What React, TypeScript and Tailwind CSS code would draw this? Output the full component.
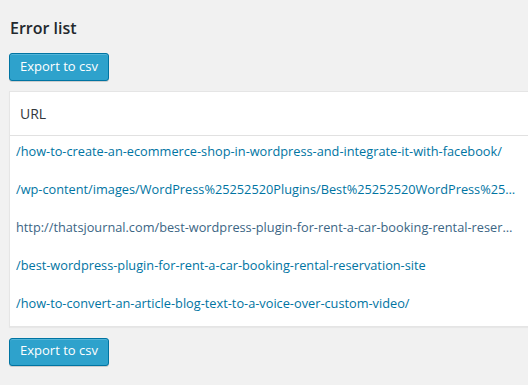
const rows = [
  { url: '/how-to-create-an-ecommerce-shop-in-wordpress-and-integrate-it-with-facebook/', link: true },
  { url: '/wp-content/images/WordPress%25252520Plugins/Best%25252520WordPress%25252520Plugins/', link: true },
  { url: 'http://thatsjournal.com/best-wordpress-plugin-for-rent-a-car-booking-rental-reservation-site/', link: false },
  { url: '/best-wordpress-plugin-for-rent-a-car-booking-rental-reservation-site', link: true },
  { url: '/how-to-convert-an-article-blog-text-to-a-voice-over-custom-video/', link: true },
]

function ExportButton() {
  return (
    <button className="h-[28px] w-[100px] rounded-[3px] border border-[#0074a2] bg-[#2ea2cc] pb-px text-[13px] text-white shadow-[inset_0_1px_0_rgba(120,200,230,0.5),0_1px_0_rgba(0,0,0,0.15)]">
      Export to csv
    </button>
  )
}

export default function App() {
  return (
    <div
      className="h-[385px] w-[528px] overflow-hidden bg-[#f1f1f1] pl-[9px] pt-[17px] text-[#444]"
      style={{ fontFamily: '"Open Sans", sans-serif' }}
    >
      <h3 className="ml-px text-[16px] font-semibold leading-[22px] text-[#23282d]">Error list</h3>

      <div className="mt-[14px]">
        <ExportButton />
      </div>

      {/* Table */}
      <div className="mt-[10px] w-[560px] border border-[#e5e5e5] bg-white shadow-[0_1px_1px_rgba(0,0,0,0.04)]">
        <div className="flex h-[44px] items-center border-b border-[#e1e1e1] pl-[10px] text-[14px] text-[#32373c]">
          URL
        </div>
        {rows.map((r, i) => (
          <div key={i} className="h-[38px] pl-[6px] pt-[5px] leading-[20px]">
            <div
              className={`w-[500px] truncate text-[12.75px] ${r.link ? 'text-[#0074a2]' : 'text-[#3b6584]'}`}
            >
              {r.url}
            </div>
          </div>
        ))}
      </div>

      <div className="mt-[10px]">
        <ExportButton />
      </div>
    </div>
  )
}
